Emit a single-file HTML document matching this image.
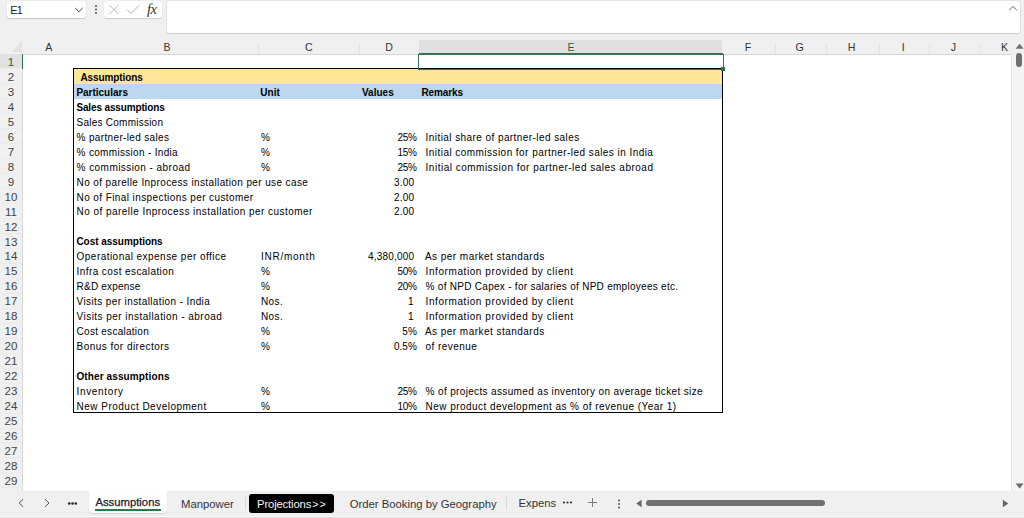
<!DOCTYPE html>
<html><head><meta charset="utf-8"><style>
html,body{margin:0;padding:0;}
body{width:1024px;height:518px;overflow:hidden;position:relative;background:#f0f0f0;font-family:"Liberation Sans",sans-serif;color:#000;}
.a{position:absolute;white-space:nowrap;}
.t{position:absolute;white-space:nowrap;font-size:10.0px;letter-spacing:0.2px;line-height:11.5px;}
.b{-webkit-text-stroke:0;}
.b{font-weight:bold;font-size:10.0px;letter-spacing:0;line-height:11.5px;}
.r{text-align:right;}
.ch{position:absolute;top:40px;height:14px;font-size:10.6px;color:#333;text-align:center;line-height:14.5px;}
.chs{position:absolute;top:44px;width:1px;height:10px;background:#e3e3e3;}
.rh{position:absolute;left:0;width:22px;font-size:11.5px;color:#444;text-align:center;}
.rhs{position:absolute;left:0;width:22px;height:1px;background:#ebebeb;}
.tab{position:absolute;font-size:10.5px;color:#333;white-space:nowrap;}
</style></head><body>

<div class="a" style="left:7px;top:1px;width:79px;height:17px;background:#fff;border-radius:3px;box-shadow:0 0.5px 1px rgba(0,0,0,0.18);"></div>
<div class="a" style="left:10.2px;top:3.6px;font-size:10.8px;line-height:13px;color:#222;letter-spacing:-0.7px;">E1</div>
<svg class="a" style="left:74px;top:7px" width="10" height="6" viewBox="0 0 10 6"><path d="M1.2 1 L4.9 4.7 L8.6 1" fill="none" stroke="#444" stroke-width="1"/></svg>
<svg class="a" style="left:94px;top:4px" width="4" height="11" viewBox="0 0 4 11"><circle cx="2" cy="2" r="0.9" fill="#444"/><circle cx="2" cy="5.5" r="0.9" fill="#444"/><circle cx="2" cy="9" r="0.9" fill="#444"/></svg>
<div class="a" style="left:104px;top:1px;width:58px;height:17px;background:#fff;border-radius:3px;box-shadow:0 0.5px 1px rgba(0,0,0,0.15);"></div>
<svg class="a" style="left:108px;top:4px" width="12" height="11" viewBox="0 0 12 11"><path d="M1.5 1 L10.5 10 M10.5 1 L1.5 10" fill="none" stroke="#b5b5b5" stroke-width="1"/></svg>
<svg class="a" style="left:126px;top:4px" width="14" height="11" viewBox="0 0 14 11"><path d="M1 5.5 L5 9.5 L13 1.5" fill="none" stroke="#b5b5b5" stroke-width="1"/></svg>
<div class="a" style="left:147px;top:1px;font-family:'Liberation Serif',serif;font-style:italic;font-size:14.5px;line-height:17px;color:#333;letter-spacing:-0.5px;">fx</div>
<div class="a" style="left:167px;top:1px;width:853px;height:32px;background:#fff;border-radius:2.5px;box-shadow:0 0 0 0.6px rgba(0,0,0,0.08),0 0.5px 1px rgba(0,0,0,0.12);"></div>
<svg class="a" style="left:1008px;top:5px" width="10" height="7" viewBox="0 0 10 7"><path d="M1.2 5.2 L5 1.5 L8.8 5.2" fill="none" stroke="#555" stroke-width="0.9"/></svg>
<div class="a" style="left:419px;top:40px;width:303px;height:13px;background:#e0e0e0;"></div>
<div class="a" style="left:22px;top:54px;width:990px;height:437px;background:#fff;"></div>
<div class="a" style="left:0px;top:54px;width:1012px;height:1px;background:#d6d6d6;"></div>
<div class="a" style="left:419px;top:52.6px;width:304px;height:1.5px;background:#35704d;"></div>
<div class="ch" style="left:23.3px;width:51px;color:#333">A</div>
<div class="ch" style="left:74.3px;width:185.3px;color:#333">B</div>
<div class="ch" style="left:258.6px;width:100.5px;color:#333">C</div>
<div class="chs" style="left:258.3px"></div>
<div class="ch" style="left:359.1px;width:60.19999999999999px;color:#333">D</div>
<div class="chs" style="left:358.8px"></div>
<div class="ch" style="left:419.3px;width:303.5px;color:#1e5e38">E</div>
<div class="ch" style="left:722.0px;width:52.200000000000045px;color:#333">F</div>
<div class="ch" style="left:774.2px;width:51.0px;color:#333">G</div>
<div class="chs" style="left:774.7px"></div>
<div class="ch" style="left:825.2px;width:52.89999999999998px;color:#333">H</div>
<div class="chs" style="left:825.7px"></div>
<div class="ch" style="left:878.1px;width:50.19999999999993px;color:#333">I</div>
<div class="chs" style="left:878.6px"></div>
<div class="ch" style="left:928.3px;width:50.200000000000045px;color:#333">J</div>
<div class="chs" style="left:928.8px"></div>
<div class="ch" style="left:978.5px;width:52px;color:#333">K</div>
<div class="chs" style="left:979px"></div>
<svg class="a" style="left:11px;top:41px" width="11" height="12" viewBox="0 0 11 12"><path d="M10 1 L10 11 L1 11 Z" fill="#e2e2e2"/></svg>
<div class="a" style="left:21px;top:40px;width:1px;height:14px;background:#e6e6e6;"></div>
<div class="a" style="left:0;top:54px;width:22px;height:15px;background:#e1e1e1;"></div>
<div class="a" style="left:22px;top:54px;width:1px;height:437px;background:#d9d9d9;"></div>
<div class="a" style="left:21.8px;top:54px;width:1.4px;height:15px;background:#2f6f4b;"></div>
<div class="rh" style="top:54.00px;height:14.96px;line-height:16.16px;color:#1e5e38">1</div>
<div class="rhs" style="top:68.46px"></div>
<div class="rh" style="top:68.96px;height:14.96px;line-height:16.16px;color:#444">2</div>
<div class="rhs" style="top:83.42px"></div>
<div class="rh" style="top:83.92px;height:14.96px;line-height:16.16px;color:#444">3</div>
<div class="rhs" style="top:98.38px"></div>
<div class="rh" style="top:98.88px;height:14.96px;line-height:16.16px;color:#444">4</div>
<div class="rhs" style="top:113.34px"></div>
<div class="rh" style="top:113.84px;height:14.96px;line-height:16.16px;color:#444">5</div>
<div class="rhs" style="top:128.30px"></div>
<div class="rh" style="top:128.80px;height:14.96px;line-height:16.16px;color:#444">6</div>
<div class="rhs" style="top:143.26px"></div>
<div class="rh" style="top:143.76px;height:14.96px;line-height:16.16px;color:#444">7</div>
<div class="rhs" style="top:158.22px"></div>
<div class="rh" style="top:158.72px;height:14.96px;line-height:16.16px;color:#444">8</div>
<div class="rhs" style="top:173.18px"></div>
<div class="rh" style="top:173.68px;height:14.96px;line-height:16.16px;color:#444">9</div>
<div class="rhs" style="top:188.14px"></div>
<div class="rh" style="top:188.64px;height:14.96px;line-height:16.16px;color:#444">10</div>
<div class="rhs" style="top:203.10px"></div>
<div class="rh" style="top:203.60px;height:14.96px;line-height:16.16px;color:#444">11</div>
<div class="rhs" style="top:218.06px"></div>
<div class="rh" style="top:218.56px;height:14.96px;line-height:16.16px;color:#444">12</div>
<div class="rhs" style="top:233.02px"></div>
<div class="rh" style="top:233.52px;height:14.96px;line-height:16.16px;color:#444">13</div>
<div class="rhs" style="top:247.98px"></div>
<div class="rh" style="top:248.48px;height:14.96px;line-height:16.16px;color:#444">14</div>
<div class="rhs" style="top:262.94px"></div>
<div class="rh" style="top:263.44px;height:14.96px;line-height:16.16px;color:#444">15</div>
<div class="rhs" style="top:277.90px"></div>
<div class="rh" style="top:278.40px;height:14.96px;line-height:16.16px;color:#444">16</div>
<div class="rhs" style="top:292.86px"></div>
<div class="rh" style="top:293.36px;height:14.96px;line-height:16.16px;color:#444">17</div>
<div class="rhs" style="top:307.82px"></div>
<div class="rh" style="top:308.32px;height:14.96px;line-height:16.16px;color:#444">18</div>
<div class="rhs" style="top:322.78px"></div>
<div class="rh" style="top:323.28px;height:14.96px;line-height:16.16px;color:#444">19</div>
<div class="rhs" style="top:337.74px"></div>
<div class="rh" style="top:338.24px;height:14.96px;line-height:16.16px;color:#444">20</div>
<div class="rhs" style="top:352.70px"></div>
<div class="rh" style="top:353.20px;height:14.96px;line-height:16.16px;color:#444">21</div>
<div class="rhs" style="top:367.66px"></div>
<div class="rh" style="top:368.16px;height:14.96px;line-height:16.16px;color:#444">22</div>
<div class="rhs" style="top:382.62px"></div>
<div class="rh" style="top:383.12px;height:14.96px;line-height:16.16px;color:#444">23</div>
<div class="rhs" style="top:397.58px"></div>
<div class="rh" style="top:398.08px;height:14.96px;line-height:16.16px;color:#444">24</div>
<div class="rhs" style="top:412.54px"></div>
<div class="rh" style="top:413.04px;height:14.96px;line-height:16.16px;color:#444">25</div>
<div class="rhs" style="top:427.50px"></div>
<div class="rh" style="top:428.00px;height:14.96px;line-height:16.16px;color:#444">26</div>
<div class="rhs" style="top:442.46px"></div>
<div class="rh" style="top:442.96px;height:14.96px;line-height:16.16px;color:#444">27</div>
<div class="rhs" style="top:457.42px"></div>
<div class="rh" style="top:457.92px;height:14.96px;line-height:16.16px;color:#444">28</div>
<div class="rhs" style="top:472.38px"></div>
<div class="rh" style="top:472.88px;height:14.96px;line-height:16.16px;color:#444">29</div>
<div class="rhs" style="top:487.34px"></div>
<div class="rh" style="top:487.84px;height:14.96px;line-height:16.16px;color:#444">30</div>
<div class="rhs" style="top:502.30px"></div>
<div class="a" style="left:73px;top:68.96px;width:649px;height:14.96px;background:#ffe699;"></div>
<div class="a" style="left:73px;top:83.92px;width:649px;height:14.96px;background:#bdd7ee;"></div>
<div class="a" style="left:73px;top:68.36px;width:648px;height:342.88px;border:1px solid #000;"></div>
<div class="t b" style="left:80.40px;top:71.84px;letter-spacing:-0.098px">Assumptions</div>
<div class="t b" style="left:76.40px;top:86.80px;letter-spacing:-0.013px">Particulars</div>
<div class="t b" style="left:260.30px;top:86.80px;letter-spacing:0.064px">Unit</div>
<div class="t b" style="left:361.90px;top:86.80px;letter-spacing:0.034px">Values</div>
<div class="t b" style="left:421.50px;top:86.80px;letter-spacing:-0.132px">Remarks</div>
<div class="t b" style="left:76.40px;top:101.76px;letter-spacing:-0.139px">Sales assumptions</div>
<div class="t" style="left:76.60px;top:116.72px;letter-spacing:0.237px">Sales Commission</div>
<div class="t" style="left:76.60px;top:131.69px;letter-spacing:0.347px">% partner-led sales</div>
<div class="t" style="left:260.90px;top:131.69px">%</div>
<div class="t" style="left:397.40px;top:131.69px;letter-spacing:-0.212px">25%</div>
<div class="t" style="left:425.60px;top:131.69px;letter-spacing:0.427px">Initial share of partner-led sales</div>
<div class="t" style="left:76.60px;top:146.64px;letter-spacing:0.317px">% commission - India</div>
<div class="t" style="left:260.90px;top:146.64px">%</div>
<div class="t" style="left:397.40px;top:146.64px;letter-spacing:-0.212px">15%</div>
<div class="t" style="left:425.60px;top:146.64px;letter-spacing:0.452px">Initial commission for partner-led sales in India</div>
<div class="t" style="left:76.60px;top:161.60px;letter-spacing:0.444px">% commission - abroad</div>
<div class="t" style="left:260.90px;top:161.60px">%</div>
<div class="t" style="left:397.40px;top:161.60px;letter-spacing:-0.212px">25%</div>
<div class="t" style="left:425.60px;top:161.60px;letter-spacing:0.496px">Initial commission for partner-led sales abroad</div>
<div class="t" style="left:76.60px;top:176.56px;letter-spacing:0.383px">No of parelle Inprocess installation per use case</div>
<div class="t" style="left:394.00px;top:176.56px;letter-spacing:0.166px">3.00</div>
<div class="t" style="left:76.60px;top:191.53px;letter-spacing:0.404px">No of Final inspections per customer</div>
<div class="t" style="left:394.00px;top:191.53px;letter-spacing:0.166px">2.00</div>
<div class="t" style="left:76.60px;top:206.49px;letter-spacing:0.453px">No of parelle Inprocess installation per customer</div>
<div class="t" style="left:394.00px;top:206.49px;letter-spacing:0.166px">2.00</div>
<div class="t b" style="left:76.40px;top:236.41px;letter-spacing:-0.028px">Cost assumptions</div>
<div class="t" style="left:76.60px;top:251.37px;letter-spacing:0.460px">Operational expense per office</div>
<div class="t" style="left:260.90px;top:251.37px;letter-spacing:0.759px">INR/month</div>
<div class="t" style="left:367.90px;top:251.37px;letter-spacing:0.209px">4,380,000</div>
<div class="t" style="left:424.90px;top:251.37px;letter-spacing:0.471px">As per market standards</div>
<div class="t" style="left:76.60px;top:266.32px;letter-spacing:0.411px">Infra cost escalation</div>
<div class="t" style="left:260.90px;top:266.32px">%</div>
<div class="t" style="left:397.40px;top:266.32px;letter-spacing:-0.212px">50%</div>
<div class="t" style="left:425.60px;top:266.32px;letter-spacing:0.578px">Information provided by client</div>
<div class="t" style="left:76.60px;top:281.28px;letter-spacing:0.196px">R&amp;D expense</div>
<div class="t" style="left:260.90px;top:281.28px">%</div>
<div class="t" style="left:397.40px;top:281.28px;letter-spacing:-0.212px">20%</div>
<div class="t" style="left:425.60px;top:281.28px;letter-spacing:0.281px">% of NPD Capex - for salaries of NPD employees etc.</div>
<div class="t" style="left:76.60px;top:296.25px;letter-spacing:0.387px">Visits per installation - India</div>
<div class="t" style="left:260.90px;top:296.25px;letter-spacing:0.439px">Nos.</div>
<div class="t" style="left:408.10px;top:296.25px;letter-spacing:0.300px">1</div>
<div class="t" style="left:425.60px;top:296.25px;letter-spacing:0.578px">Information provided by client</div>
<div class="t" style="left:76.60px;top:311.21px;letter-spacing:0.457px">Visits per installation - abroad</div>
<div class="t" style="left:260.90px;top:311.21px;letter-spacing:0.439px">Nos.</div>
<div class="t" style="left:408.10px;top:311.21px;letter-spacing:0.300px">1</div>
<div class="t" style="left:425.60px;top:311.21px;letter-spacing:0.578px">Information provided by client</div>
<div class="t" style="left:76.60px;top:326.17px;letter-spacing:0.271px">Cost escalation</div>
<div class="t" style="left:260.90px;top:326.17px">%</div>
<div class="t" style="left:402.24px;top:326.17px;letter-spacing:0.300px">5%</div>
<div class="t" style="left:424.90px;top:326.17px;letter-spacing:0.471px">As per market standards</div>
<div class="t" style="left:76.60px;top:341.12px;letter-spacing:0.471px">Bonus for directors</div>
<div class="t" style="left:260.90px;top:341.12px">%</div>
<div class="t" style="left:394.00px;top:341.12px;letter-spacing:-0.000px">0.5%</div>
<div class="t" style="left:425.60px;top:341.12px;letter-spacing:0.445px">of revenue</div>
<div class="t b" style="left:76.40px;top:371.05px;letter-spacing:0.121px">Other assumptions</div>
<div class="t" style="left:76.60px;top:386.00px;letter-spacing:0.646px">Inventory</div>
<div class="t" style="left:260.90px;top:386.00px">%</div>
<div class="t" style="left:397.40px;top:386.00px;letter-spacing:-0.212px">25%</div>
<div class="t" style="left:425.60px;top:386.00px;letter-spacing:0.350px">% of projects assumed as inventory on average ticket size</div>
<div class="t" style="left:76.60px;top:400.97px;letter-spacing:0.483px">New Product Development</div>
<div class="t" style="left:260.90px;top:400.97px">%</div>
<div class="t" style="left:397.40px;top:400.97px;letter-spacing:-0.212px">10%</div>
<div class="t" style="left:425.60px;top:400.97px;letter-spacing:0.452px">New product development as % of revenue (Year 1)</div>
<div class="a" style="left:418.3px;top:53.6px;width:303.4px;height:14.4px;border:1.2px solid #3a7552;"></div>
<div class="a" style="left:720.5px;top:66.8px;width:4px;height:4px;background:#2f6f4b;"></div>
<div class="a" style="left:1010.5px;top:54px;width:13.5px;height:437px;background:#f5f5f5;border-left:1px solid #e6e6e6;"></div>
<svg class="a" style="left:1015px;top:43px" width="10" height="7" viewBox="0 0 10 7"><path d="M0.6 5.8 L4.6 0.8 L8.6 5.8 Z" fill="#6d6d6d"/></svg>
<div class="a" style="left:1016px;top:53.4px;width:6.2px;height:13.5px;background:#707070;border-radius:3.1px;"></div>
<svg class="a" style="left:1015px;top:482.5px" width="10" height="7" viewBox="0 0 10 7"><path d="M0.6 0.6 L4.6 5.6 L8.6 0.6 Z" fill="#6a6a6a"/></svg>
<div class="a" style="left:0;top:491px;width:1024px;height:25px;background:#f0f0f0;"></div>
<div class="a" style="left:0;top:515.6px;width:1024px;height:1px;background:#fafcfc;"></div>
<div class="a" style="left:0;top:516.6px;width:1024px;height:1.4px;background:#dde1e1;"></div>
<svg class="a" style="left:17px;top:498px" width="8" height="10" viewBox="0 0 8 10"><path d="M6.2 1.2 L2.2 5 L6.2 8.8" fill="none" stroke="#444" stroke-width="0.9"/></svg>
<svg class="a" style="left:43px;top:498px" width="8" height="10" viewBox="0 0 8 10"><path d="M2 1.2 L6 5 L2 8.8" fill="none" stroke="#444" stroke-width="0.9"/></svg>
<svg class="a" style="left:67px;top:500.5px" width="11" height="5" viewBox="0 0 11 5"><circle cx="2.2" cy="2.5" r="1.25" fill="#222"/><circle cx="5.5" cy="2.5" r="1.25" fill="#222"/><circle cx="8.8" cy="2.5" r="1.25" fill="#222"/></svg>
<div class="a" style="left:89px;top:491px;width:78px;height:22px;background:#fff;border-radius:0 0 4px 4px;box-shadow:0 0.5px 1px rgba(0,0,0,0.12);"></div>
<div class="tab" style="left:95.4px;top:496px;font-size:11.3px;line-height:13px;color:#222;-webkit-text-stroke:0.25px #222;">Assumptions</div>
<div class="a" style="left:95px;top:509px;width:66px;height:2px;background:#2b7a4b;"></div>
<div class="tab" style="left:181px;top:497.6px;font-size:11.3px;line-height:13px;color:#333;">Manpower</div>
<div class="a" style="left:245px;top:497px;width:1px;height:13px;background:#d9d9d9;"></div>
<div class="a" style="left:249px;top:494px;width:85px;height:19px;background:#000;border-radius:3px;"></div>
<div class="tab" style="left:257px;top:497.6px;font-size:11.3px;line-height:13px;color:#f4f4f4;letter-spacing:-0.15px;">Projections<span style="font-size:10.6px;letter-spacing:1.1px;margin-left:1px;">&gt;&gt;</span></div>
<div class="tab" style="left:349.7px;top:497.6px;font-size:11.3px;line-height:13px;color:#333;">Order Booking by Geography</div>
<div class="a" style="left:506px;top:497px;width:1px;height:13px;background:#d9d9d9;"></div>
<div class="tab" style="left:518.5px;top:497px;width:37px;overflow:hidden;font-size:11.3px;line-height:13px;color:#333;">Expenses</div>
<svg class="a" style="left:562px;top:500px" width="11" height="5" viewBox="0 0 11 5"><circle cx="2" cy="2.5" r="1.1" fill="#333"/><circle cx="5.5" cy="2.5" r="1.1" fill="#333"/><circle cx="9" cy="2.5" r="1.1" fill="#333"/></svg>
<svg class="a" style="left:587px;top:497px" width="11" height="11" viewBox="0 0 11 11"><path d="M5.5 1 L5.5 10 M1 5.5 L10 5.5" fill="none" stroke="#7a7a7a" stroke-width="1"/></svg>
<svg class="a" style="left:617px;top:499px" width="4" height="11" viewBox="0 0 4 11"><circle cx="2" cy="1.5" r="0.9" fill="#444"/><circle cx="2" cy="5" r="0.9" fill="#444"/><circle cx="2" cy="8.5" r="0.9" fill="#444"/></svg>
<svg class="a" style="left:634.5px;top:498.8px" width="8" height="9" viewBox="0 0 8 9"><path d="M6.6 0.7 L1.2 4.5 L6.6 8.3 Z" fill="#666"/></svg>
<div class="a" style="left:646px;top:500px;width:179px;height:6px;background:#707070;border-radius:3px;"></div>
<svg class="a" style="left:1002px;top:498.5px" width="8" height="9" viewBox="0 0 8 9"><path d="M0.8 0.7 L6.4 4.6 L0.8 8.3 Z" fill="#666"/></svg>
</body></html>
